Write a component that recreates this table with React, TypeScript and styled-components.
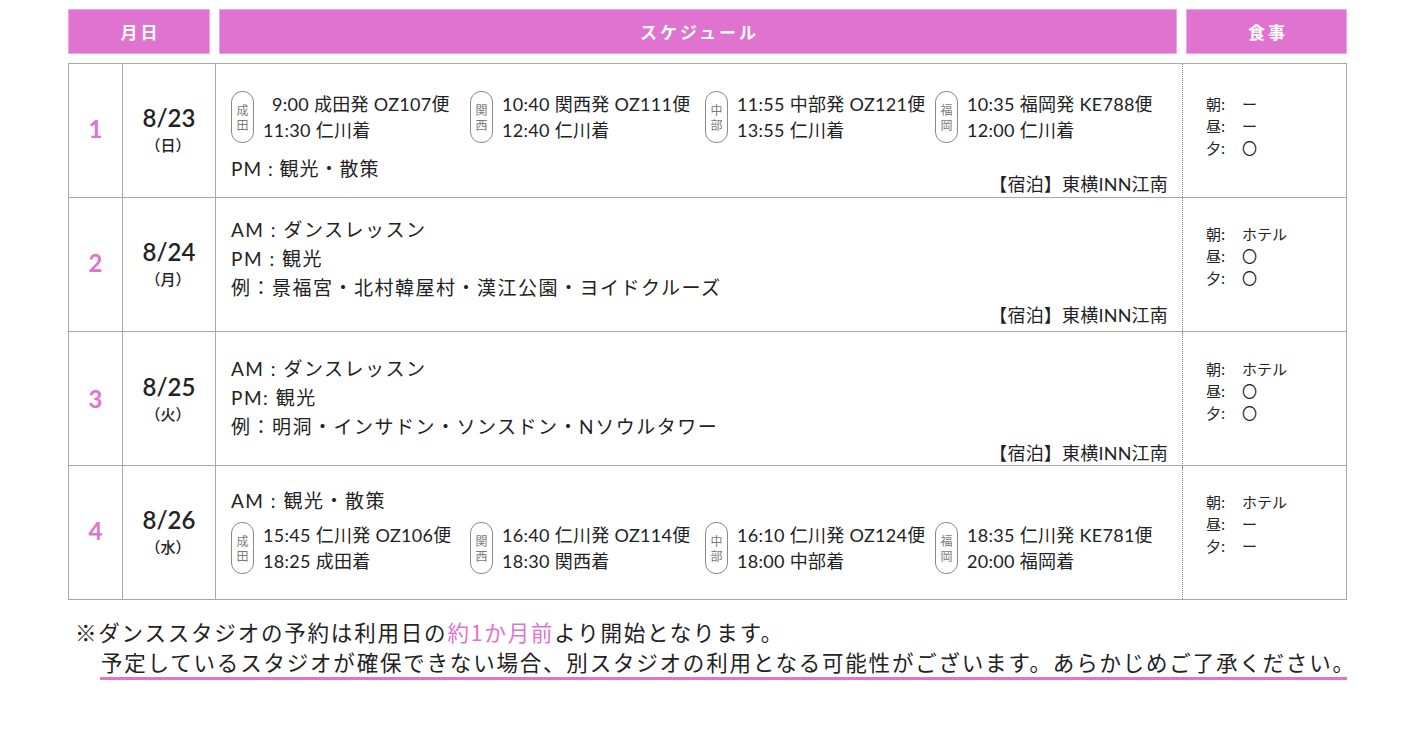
import React from 'react'
import styled, { createGlobalStyle } from 'styled-components'

const PINK = '#e073d0'
const LINE = '#a8a8a8'
const INK = '#222'

const GlobalStyle = createGlobalStyle`
  * { box-sizing: border-box; }
  body {
    margin: 0;
    background: #fff;
    color: ${INK};
    font-family: 'Lato', 'Noto Sans CJK JP', sans-serif;
  }
`

interface Flight {
  code: string[]
  dep: string
  arr: string
  pad?: boolean
}

interface Day {
  no: number
  date: string
  week: string
  top: number
  lines?: string[]
  lineHeight?: number
  flights?: Flight[]
  flightGap?: number
  afterFlights?: string
  lodging?: boolean
  lift?: string
  bottom: number
  meal: [string, string, string]
  mealTop: number
}

const days: Day[] = [
  {
    no: 1,
    date: '8/23',
    week: '（日）',
    top: 27,
    flights: [
      { code: ['成', '田'], dep: '9:00 成田発 OZ107便', arr: '11:30 仁川着', pad: true },
      { code: ['関', '西'], dep: '10:40 関西発 OZ111便', arr: '12:40 仁川着' },
      { code: ['中', '部'], dep: '11:55 中部発 OZ121便', arr: '13:55 仁川着' },
      { code: ['福', '岡'], dep: '10:35 福岡発 KE788便', arr: '12:00 仁川着' },
    ],
    afterFlights: 'PM : 観光・散策',
    lodging: true,
    lift: '-11px',
    bottom: 0,
    meal: ['ー', 'ー', '〇'],
    mealTop: 29,
  },
  {
    no: 2,
    date: '8/24',
    week: '（月）',
    top: 17,
    lineHeight: 29,
    lines: ['AM : ダンスレッスン', 'PM : 観光', '例：景福宮・北村韓屋村・漢江公園・ヨイドクルーズ'],
    lodging: true,
    bottom: 4,
    meal: ['ホテル', '〇', '〇'],
    mealTop: 25,
  },
  {
    no: 3,
    date: '8/25',
    week: '（火）',
    top: 22,
    lineHeight: 29,
    lines: ['AM : ダンスレッスン', 'PM: 観光', '例：明洞・インサドン・ソンスドン・Nソウルタワー'],
    lodging: true,
    bottom: 3,
    meal: ['ホテル', '〇', '〇'],
    mealTop: 26,
  },
  {
    no: 4,
    date: '8/26',
    week: '（水）',
    top: 21,
    lineHeight: 28,
    lines: ['AM : 観光・散策'],
    flightGap: 7,
    flights: [
      { code: ['成', '田'], dep: '15:45 仁川発 OZ106便', arr: '18:25 成田着' },
      { code: ['関', '西'], dep: '16:40 仁川発 OZ114便', arr: '18:30 関西着' },
      { code: ['中', '部'], dep: '16:10 仁川発 OZ124便', arr: '18:00 中部着' },
      { code: ['福', '岡'], dep: '18:35 仁川発 KE781便', arr: '20:00 福岡着' },
    ],
    bottom: 0,
    meal: ['ホテル', 'ー', 'ー'],
    mealTop: 25,
  },
]

const App: React.FC = () => {
  return (
    <>
      <GlobalStyle />
      <Page>
        <HeadRow>
          <HeadCell>月日</HeadCell>
          <HeadCell>スケジュール</HeadCell>
          <HeadCell>食事</HeadCell>
        </HeadRow>

        <Table>
          {days.map((d) => (
            <Row key={d.no}>
              <NumCell>{d.no}</NumCell>
              <DateCell>
                <DateText>{d.date}</DateText>
                <WeekText>{d.week}</WeekText>
              </DateCell>
              <ScheduleCell $top={d.top} $bottom={d.bottom}>
                {d.lines && (
                  <Lines $lh={d.lineHeight ?? 28}>
                    {d.lines.map((l) => (
                      <div key={l}>{l}</div>
                    ))}
                  </Lines>
                )}
                {d.flights && (
                  <Flights $gap={d.flightGap ?? 0}>
                    {d.flights.map((f) => (
                      <FlightGroup key={f.dep}>
                        <Badge>
                          {f.code.map((c) => (
                            <span key={c}>{c}</span>
                          ))}
                        </Badge>
                        <FlightText>
                          <div>
                            {f.pad && <Pad />}
                            {f.dep}
                          </div>
                          <div>{f.arr}</div>
                        </FlightText>
                      </FlightGroup>
                    ))}
                  </Flights>
                )}
                {d.afterFlights && <AfterLine>{d.afterFlights}</AfterLine>}
                {d.lodging && <Lodging $lift={d.lift}>【宿泊】東横INN江南</Lodging>}
              </ScheduleCell>
              <MealCell $top={d.mealTop}>
                <span>朝:</span>
                <span>{d.meal[0]}</span>
                <span>昼:</span>
                <span>{d.meal[1]}</span>
                <span>夕:</span>
                <span>{d.meal[2]}</span>
              </MealCell>
            </Row>
          ))}
        </Table>

        <Notes>
          <NoteLine>
            ※ダンススタジオの予約は利用日の<Accent>約1か月前</Accent>より開始となります。
          </NoteLine>
          <NoteUnder>
            予定しているスタジオが確保できない場合、別スタジオの利用となる可能性がございます。あらかじめご了承ください。
          </NoteUnder>
        </Notes>
      </Page>
    </>
  )
}

const Page = styled.div`
  padding: 9px 0 40px 68px;
  width: 1347px;
`

const HeadRow = styled.div`
  display: grid;
  grid-template-columns: 142px 958px 161px;
  column-gap: 9px;
  height: 45px;
`

const HeadCell = styled.div`
  display: flex;
  align-items: center;
  justify-content: center;
  background: ${PINK};
  border: 1px solid #eea6e4;
  color: #fff;
  font-family: 'Noto Sans CJK JP', sans-serif;
  font-weight: 700;
  font-size: 17px;
  letter-spacing: 3px;
  padding-left: 3px;
`

const Table = styled.div`
  margin-top: 9px;
  border: 1px solid ${LINE};
  width: 1279px;
`

const Row = styled.div`
  display: grid;
  grid-template-columns: 54px 93px 967px 1fr;
  height: 133px;
  box-sizing: content-box;
  & + & {
    border-top: 1px solid ${LINE};
  }
`

const NumCell = styled.div`
  display: flex;
  align-items: center;
  justify-content: center;
  border-right: 1px solid ${LINE};
  color: ${PINK};
  font-family: 'Lato', sans-serif;
  font-weight: 700;
  font-size: 24px;
  padding-bottom: 4px;
`

const DateCell = styled.div`
  display: flex;
  flex-direction: column;
  align-items: center;
  justify-content: center;
  border-right: 1px solid ${LINE};
  padding-bottom: 2px;
`

const DateText = styled.div`
  font-family: 'Lato', sans-serif;
  font-weight: 600;
  font-size: 24px;
  line-height: 30px;
`

const WeekText = styled.div`
  font-family: 'Noto Sans CJK JP', sans-serif;
  font-weight: 500;
  font-size: 15px;
  line-height: 24px;
  padding-right: 2px;
`

const ScheduleCell = styled.div<{ $top: number; $bottom: number }>`
  display: flex;
  flex-direction: column;
  border-right: 1px dotted #8a8a8a;
  padding: ${(p) => p.$top}px 14px ${(p) => p.$bottom}px 15px;
  font-size: 19px;
  letter-spacing: 1.5px;
`

const Lines = styled.div<{ $lh: number }>`
  line-height: ${(p) => p.$lh}px;
`

const Flights = styled.div<{ $gap: number }>`
  display: grid;
  grid-template-columns: 239px 235px 230px auto;
  margin-top: ${(p) => p.$gap}px;
`

const FlightGroup = styled.div`
  display: flex;
  align-items: center;
  gap: 9px;
`

const Badge = styled.div`
  display: flex;
  flex-direction: column;
  align-items: center;
  justify-content: center;
  width: 23px;
  height: 52px;
  border: 1.5px solid #8a8a8a;
  border-radius: 11px;
  color: #7a7a7a;
  font-family: 'Noto Sans CJK JP', sans-serif;
  font-size: 12px;
  line-height: 15px;
  letter-spacing: 0;
`

const FlightText = styled.div`
  font-size: 18px;
  line-height: 26px;
  letter-spacing: 0.3px;
  white-space: nowrap;
`

const Pad = styled.span`
  display: inline-block;
  width: 9px;
`

const AfterLine = styled.div`
  margin-top: 12px;
  line-height: 28px;
  letter-spacing: 1px;
`

const Lodging = styled.div<{ $lift?: string }>`
  align-self: flex-end;
  margin-top: ${(p) => p.$lift ?? 'auto'};
  line-height: 24px;
  font-size: 18px;
  letter-spacing: 0.2px;
`

const MealCell = styled.div<{ $top: number }>`
  display: grid;
  grid-template-columns: 36px auto;
  grid-auto-rows: 22px;
  align-content: start;
  padding: ${(p) => p.$top}px 0 0 23px;
  font-family: 'Noto Sans CJK JP', sans-serif;
  font-size: 15px;
  line-height: 22px;
`

const Notes = styled.div`
  margin-top: 17px;
  font-family: 'Noto Sans CJK JP', sans-serif;
  font-weight: 400;
  font-size: 21.5px;
  letter-spacing: 1.8px;
  line-height: 30px;
`

const NoteLine = styled.div`
  padding-left: 7px;
`

const Accent = styled.span`
  color: ${PINK};
`

const NoteUnder = styled.div`
  margin-left: 32px;
  padding-left: 1px;
  border-bottom: 3px solid ${PINK};
  white-space: nowrap;
`

export default App
